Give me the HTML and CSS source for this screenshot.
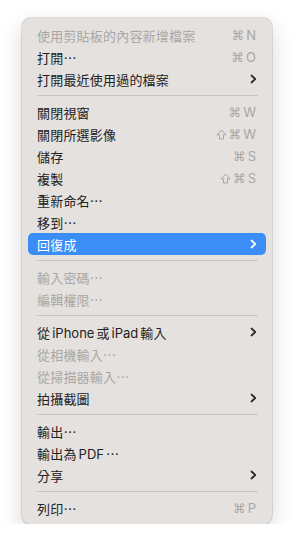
FILE: index.html
```html
<!DOCTYPE html>
<html lang="zh-Hant">

<head>
    <meta charset="UTF-8">
    <meta name="viewport" content="width=device-width, initial-scale=1.0">
    <title>檔案</title>

    <link rel="stylesheet" href="styles.css">
</head>

<body>
    <div class="menu">
        <div class="item disabled"><span class="label">使用剪貼板的內容新增檔案</span><span class="keys"><span class="sym">⌘</span>N</span></div>
        <div class="item"><span class="label">打開<span class="dots">…</span></span><span class="keys"><span class="sym">⌘</span>O</span></div>
        <div class="item"><span class="label">打開最近使用過的檔案</span><svg class="chevron" viewBox="0 0 7 10"><path d="M1.5 1.5 L5.3 5 L1.5 8.5"/></svg></div>

        <div class="separator"></div>

        <div class="item"><span class="label">關閉視窗</span><span class="keys"><span class="sym">⌘</span>W</span></div>
        <div class="item"><span class="label">關閉所選影像</span><span class="keys"><svg class="shift" viewBox="0 0 11 11"><path d="M5.5 1 L10 5.8 H7.5 V10 H3.5 V5.8 H1 Z"/></svg><span class="sym">⌘</span>W</span></div>
        <div class="item"><span class="label">儲存</span><span class="keys"><span class="sym">⌘</span>S</span></div>
        <div class="item"><span class="label">複製</span><span class="keys"><svg class="shift" viewBox="0 0 11 11"><path d="M5.5 1 L10 5.8 H7.5 V10 H3.5 V5.8 H1 Z"/></svg><span class="sym">⌘</span>S</span></div>
        <div class="item"><span class="label">重新命名<span class="dots">…</span></span></div>
        <div class="item"><span class="label">移到<span class="dots">…</span></span></div>
        <div class="item active"><span class="label">回復成</span><svg class="chevron" viewBox="0 0 7 10"><path d="M1.5 1.5 L5.3 5 L1.5 8.5"/></svg></div>

        <div class="separator"></div>

        <div class="item disabled"><span class="label">輸入密碼<span class="dots">…</span></span></div>
        <div class="item disabled"><span class="label">編輯權限<span class="dots">…</span></span></div>

        <div class="separator"></div>

        <div class="item"><span class="label">從<span class="latin">iPhone</span>或<span class="latin">iPad</span>輸入</span><svg class="chevron" viewBox="0 0 7 10"><path d="M1.5 1.5 L5.3 5 L1.5 8.5"/></svg></div>
        <div class="item disabled"><span class="label">從相機輸入<span class="dots">…</span></span></div>
        <div class="item disabled"><span class="label">從掃描器輸入<span class="dots">…</span></span></div>
        <div class="item"><span class="label">拍攝截圖</span><svg class="chevron" viewBox="0 0 7 10"><path d="M1.5 1.5 L5.3 5 L1.5 8.5"/></svg></div>

        <div class="separator"></div>

        <div class="item"><span class="label">輸出<span class="dots">…</span></span></div>
        <div class="item"><span class="label">輸出為<span class="latin">PDF</span><span class="dots">…</span></span></div>
        <div class="item"><span class="label">分享</span><svg class="chevron" viewBox="0 0 7 10"><path d="M1.5 1.5 L5.3 5 L1.5 8.5"/></svg></div>

        <div class="separator"></div>

        <div class="item"><span class="label">列印<span class="dots">…</span></span><span class="keys"><span class="sym">⌘</span>P</span></div>
    </div>
</body>

</html>
```

FILE: styles.css
```css
body {
    margin: 0;
    background: #ffffff;
    font-family: Inter, "Noto Sans CJK TC", sans-serif;
    box-sizing: border-box;
}

.menu {
    width: 250px;
    margin: 18px 0 0 22px;
    padding: 6px 6px 5px;
    box-sizing: border-box;
    background-color: #e4e1de;
    border-radius: 8px;
    box-shadow: 0 0 0 0.5px rgba(0, 0, 0, 0.22), 0 8px 22px rgba(0, 0, 0, 0.16);
}

.item {
    height: 22px;
    padding: 0 10px 0 9px;
    display: flex;
    align-items: center;
    justify-content: space-between;
    border-radius: 5px;
    font-size: 13px;
    color: #232220;
}

.label {
    white-space: nowrap;
    letter-spacing: 0.2px;
}

.latin {
    margin: 0 2px;
    letter-spacing: 0;
}

.dots {
    font-family: "Noto Sans CJK TC", sans-serif;
}

.disabled {
    color: #a9a7a4;
}

.active {
    background-color: #3a8ef6;
    color: #ffffff;
}

.keys {
    display: flex;
    align-items: center;
    gap: 1px;
    font-size: 13px;
    color: #a9a7a4;
}

.sym {
    font-family: "DejaVu Sans", sans-serif;
    font-size: 12.5px;
    margin-right: 1px;
}

.shift {
    width: 11px;
    height: 11px;
    margin-right: 1px;
    fill: none;
    stroke: #a9a7a4;
    stroke-width: 1;
    stroke-linejoin: round;
}

.chevron {
    width: 7px;
    height: 10px;
    margin-right: -1px;
    fill: none;
    stroke: #2a2927;
    stroke-width: 1.7;
    stroke-linecap: round;
    stroke-linejoin: round;
}

.active .chevron {
    stroke: #ffffff;
}

.separator {
    height: 1px;
    margin: 5px 8px 5px 9px;
    background-color: #c7c4c1;
}
```
